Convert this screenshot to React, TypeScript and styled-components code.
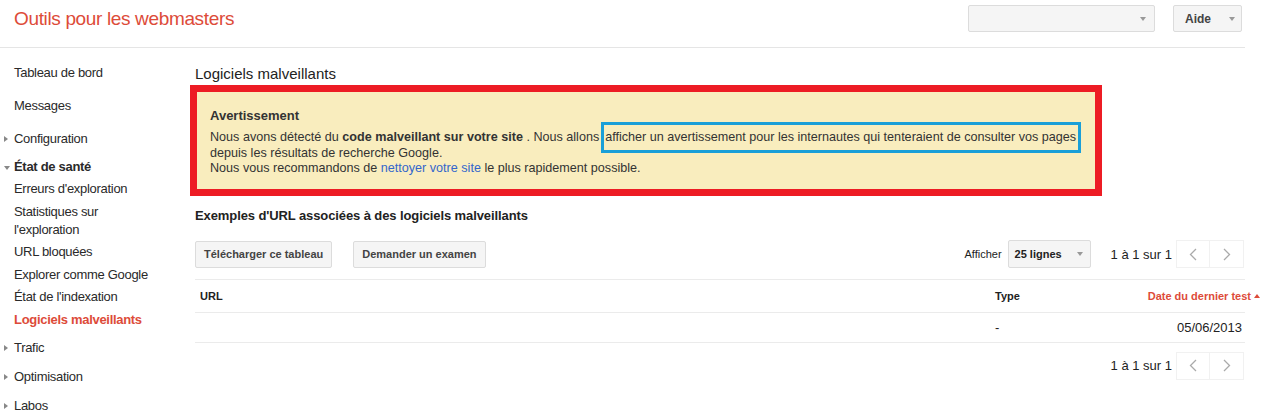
import React from "react";
import styled, { createGlobalStyle, css } from "styled-components";

const GlobalStyle = createGlobalStyle`
  html, body { margin: 0; padding: 0; background: #fff; }
  body { font-family: "Liberation Sans", Arial, sans-serif; color: #222; }
  * { box-sizing: border-box; }
`;

const Page = styled.div`
  width: 1245px;
`;

const Header = styled.header`
  height: 48px;
  border-bottom: 1px solid #e5e5e5;
  display: flex;
  align-items: flex-start;
  padding: 5px 3px 0 14px;
`;

const Brand = styled.div`
  font-size: 19px;
  letter-spacing: -0.35px;
  color: #dd4b39;
  line-height: 27px;
  flex: 1;
`;

const DownArrow = styled.span`
  display: inline-block;
  width: 0;
  height: 0;
  border-left: 3.5px solid transparent;
  border-right: 3.5px solid transparent;
  border-top: 4px solid #999;
`;

const SiteSelect = styled.div`
  width: 187px;
  height: 27px;
  background: #f5f5f5;
  border: 1px solid #dcdcdc;
  border-radius: 2px;
  display: flex;
  align-items: center;
  justify-content: flex-end;
  padding-right: 8px;
  margin-right: 18px;
`;

const HelpButton = styled.div`
  width: 69px;
  height: 27px;
  background: #f5f5f5;
  border: 1px solid #dcdcdc;
  border-radius: 2px;
  display: flex;
  align-items: center;
  justify-content: space-between;
  padding: 0 6px 0 11px;
  font-size: 12px;
  font-weight: bold;
  color: #444;
`;

const Body = styled.div`
  display: flex;
`;

const Sidebar = styled.nav`
  width: 195px;
  flex: none;
  padding-top: 8px;
  font-size: 13px;
  letter-spacing: -0.3px;
`;

const NavItem = styled.div<{ $h?: number; $active?: boolean; $bold?: boolean }>`
  position: relative;
  display: flex;
  align-items: center;
  padding-left: 14px;
  color: ${(p) => (p.$active ? "#dd4b39" : "#2a2a2a")};
  font-weight: ${(p) => (p.$bold || p.$active ? "bold" : "normal")};
  line-height: 18px;
  min-height: ${(p) => p.$h ?? 22.5}px;
`;

const Caret = styled.span<{ $open?: boolean }>`
  position: absolute;
  left: 4px;
  top: 50%;
  width: 0;
  height: 0;
  ${(p) =>
    p.$open
      ? css`
          margin-top: -1px;
          border-left: 3px solid transparent;
          border-right: 3px solid transparent;
          border-top: 4px solid #888;
        `
      : css`
          margin-top: -3px;
          border-top: 3px solid transparent;
          border-bottom: 3px solid transparent;
          border-left: 4px solid #888;
        `}
`;

const SubGroup = styled.div`
  padding-bottom: 2px;
`;

const Main = styled.main`
  flex: 1;
  padding-top: 16px;
`;

const PageTitle = styled.h1`
  margin: 0 0 1px;
  font-size: 15px;
  font-weight: normal;
  line-height: 20px;
  color: #222;
`;

const Highlight = styled.section`
  margin-left: -5px;
  width: 912px;
  border: 7px solid #ed1c24;
  background: #f9edbe;
  padding: 16px 13px 12px;
  color: #333;
`;

const WarnTitle = styled.div`
  font-size: 13px;
  font-weight: bold;
  line-height: 16px;
  margin-bottom: 6px;
  color: #333;
`;

const WarnText = styled.p`
  margin: 0;
  font-size: 12.6px;
  line-height: 15.5px;
`;

const Link = styled.a`
  color: #3366cc;
  text-decoration: none;
`;

const Boxed = styled.span`
  border: 3px solid #1a9fd8;
  padding: 5px 2px 6px 1px;
  margin-left: 2px;
`;

const SectionTitle = styled.h2`
  margin: 12px 0 0;
  font-size: 13px;
  font-weight: bold;
  letter-spacing: -0.1px;
  line-height: 16px;
  color: #222;
`;

const Toolbar = styled.div`
  display: flex;
  align-items: center;
  margin-top: 16px;
  height: 29px;
`;

const Button = styled.div`
  height: 27px;
  display: flex;
  align-items: center;
  padding: 0 8px;
  background: #f5f5f5;
  border: 1px solid #dcdcdc;
  border-radius: 2px;
  font-size: 11px;
  font-weight: bold;
  color: #444;
  margin-right: 21px;
`;

const Spacer = styled.div`
  flex: 1;
`;

const Label = styled.span`
  font-size: 11px;
  color: #222;
  margin-right: 6px;
`;

const RowsSelect = styled.div`
  width: 83px;
  height: 28px;
  background: #f5f5f5;
  border: 1px solid #dcdcdc;
  border-radius: 2px;
  display: flex;
  align-items: center;
  justify-content: space-between;
  padding: 0 7px 0 6px;
  font-size: 11px;
  font-weight: bold;
  color: #222;
  margin-right: 20px;
`;

const Pager = styled.div`
  display: flex;
  align-items: center;
  font-size: 13px;
  color: #222;
  padding-right: 1px;
`;

const PagerText = styled.span`
  margin-right: 4px;
`;

const PagerButton = styled.div<{ $first?: boolean }>`
  width: 34px;
  height: 28px;
  display: flex;
  align-items: center;
  justify-content: center;
  border: 1px solid #f1f1f1;
  ${(p) => (p.$first ? "" : "border-left: none;")}
`;

const Table = styled.div`
  margin-top: 10px;
  border-top: 1px solid #ebebeb;
`;

const Row = styled.div<{ $head?: boolean }>`
  display: grid;
  grid-template-columns: 795px 130px 1fr;
  align-items: center;
  height: ${(p) => (p.$head ? 33 : 30)}px;
  border-bottom: 1px solid #ebebeb;
  font-size: ${(p) => (p.$head ? 11 : 13)}px;
  font-weight: ${(p) => (p.$head ? "bold" : "normal")};
  color: #222;
`;

const Cell = styled.div<{ $right?: boolean; $sorted?: boolean }>`
  padding-left: 5px;
  ${(p) =>
    p.$right &&
    css`
      text-align: right;
      padding-right: 3px;
    `}
  ${(p) =>
    p.$sorted &&
    css`
      color: #dd4b39;
      margin-right: -15px;
      padding-right: 0;
    `}
`;

const UpArrow = styled.span`
  display: inline-block;
  vertical-align: middle;
  margin-left: 3px;
  margin-top: -2px;
  width: 0;
  height: 0;
  border-left: 3px solid transparent;
  border-right: 3px solid transparent;
  border-bottom: 4px solid #dd4b39;
`;

const BottomPager = styled.div`
  display: flex;
  justify-content: flex-end;
  margin-top: 9px;
`;

const Chevron = ({ dir }: { dir: "left" | "right" }) => (
  <svg width="8" height="13" viewBox="0 0 8 13">
    <polyline
      points={dir === "left" ? "7,1 1.5,6.5 7,12" : "1,1 6.5,6.5 1,12"}
      fill="none"
      stroke="#aaa"
      strokeWidth="1.3"
    />
  </svg>
);

const PagerBlock = () => (
  <Pager>
    <PagerText>1 à 1 sur 1</PagerText>
    <PagerButton $first>
      <Chevron dir="left" />
    </PagerButton>
    <PagerButton>
      <Chevron dir="right" />
    </PagerButton>
  </Pager>
);

export default function App() {
  return (
    <Page>
      <GlobalStyle />
      <Header>
        <Brand>Outils pour les webmasters</Brand>
        <SiteSelect>
          <DownArrow />
        </SiteSelect>
        <HelpButton>
          Aide
          <DownArrow />
        </HelpButton>
      </Header>
      <Body>
        <Sidebar>
          <NavItem $h={33}>Tableau de bord</NavItem>
          <NavItem $h={33}>Messages</NavItem>
          <NavItem $h={33}>
            <Caret />
            Configuration
          </NavItem>
          <SubGroup>
            <NavItem $h={23} $bold>
              <Caret $open />
              État de santé
            </NavItem>
            <NavItem>Erreurs d'exploration</NavItem>
            <NavItem $h={40.5}>
              Statistiques sur
              <br />
              l'exploration
            </NavItem>
            <NavItem>URL bloquées</NavItem>
            <NavItem>Explorer comme Google</NavItem>
            <NavItem>État de l'indexation</NavItem>
            <NavItem $active>Logiciels malveillants</NavItem>
          </SubGroup>
          <NavItem $h={29}>
            <Caret />
            Trafic
          </NavItem>
          <NavItem $h={29}>
            <Caret />
            Optimisation
          </NavItem>
          <NavItem $h={29}>
            <Caret />
            Labos
          </NavItem>
        </Sidebar>
        <Main>
          <PageTitle>Logiciels malveillants</PageTitle>
          <Highlight>
            <WarnTitle>Avertissement</WarnTitle>
            <WarnText>
              Nous avons détecté du <b>code malveillant sur votre site</b> . Nous allons
              <Boxed>afficher un avertissement pour les internautes qui tenteraient de consulter vos pages</Boxed>
              <br />
              depuis les résultats de recherche Google.
              <br />
              Nous vous recommandons de <Link href="#">nettoyer votre site</Link> le plus rapidement possible.
            </WarnText>
          </Highlight>
          <SectionTitle>Exemples d'URL associées à des logiciels malveillants</SectionTitle>
          <Toolbar>
            <Button>Télécharger ce tableau</Button>
            <Button>Demander un examen</Button>
            <Spacer />
            <Label>Afficher</Label>
            <RowsSelect>
              25 lignes
              <DownArrow />
            </RowsSelect>
            <PagerBlock />
          </Toolbar>
          <Table>
            <Row $head>
              <Cell>URL</Cell>
              <Cell>Type</Cell>
              <Cell $right $sorted>
                Date du dernier test
                <UpArrow />
              </Cell>
            </Row>
            <Row>
              <Cell />
              <Cell>-</Cell>
              <Cell $right>05/06/2013</Cell>
            </Row>
          </Table>
          <BottomPager>
            <PagerBlock />
          </BottomPager>
        </Main>
      </Body>
    </Page>
  );
}
